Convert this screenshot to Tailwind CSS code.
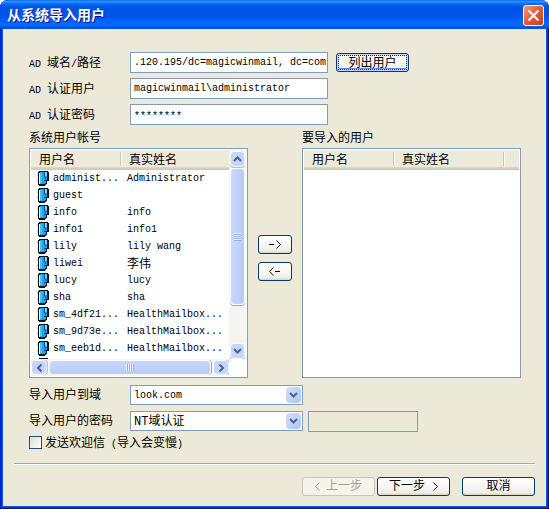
<!DOCTYPE html>
<html lang="zh-CN">

<head>
    <meta charset="UTF-8">
    <meta name="viewport" content="width=device-width, initial-scale=1.0">
    <title>从系统导入用户</title>
    <script src="https://cdn.jsdelivr.net/npm/@tailwindcss/browser@4"></script>
    <style>
        body {
            font-family: 'Liberation Mono', 'Noto Sans CJK SC', monospace;
        }

        /* Luna caption bar */
        .caption {
            background: linear-gradient(to bottom, #0058ee 0%, #3593ff 4%, #288eff 7%, #127dff 10%, #036ffc 13%, #0262ee 17%, #0057e5 22%, #0054e3 30%, #0055eb 56%, #005bf5 66%, #026afe 80%, #0066f8 90%, #0052d6 94%, #0046c0 100%);
        }

        .header {
            background: linear-gradient(to bottom, #ebeadb 0, #ebeadb 17px, #dedccb 17px, #d6d2c2 18px, #cbc7b8 20px);
        }

        .btn {
            background: linear-gradient(to bottom, #fff 0%, #f6f5f0 60%, #f0efe8 85%, #d8d2c4 100%);
        }

        .btn:disabled {
            background: #f5f4ea;
        }

        .focused {
            background: linear-gradient(to bottom, #fff 0%, #f2f1ec 100%);
            box-shadow: inset 0 0 0 2px #bcd4f6, inset 0 -3px 0 #6982ee;
        }
    </style>
</head>

<body class="bg-white text-[12px] leading-4 text-black">

    <!-- shared icons -->
    <svg class="hidden">
        <symbol id="user" viewBox="0 0 12 15" shape-rendering="crispEdges">
            <path d="M2 0h9v1h1v9h-2v3h-1v1H8v1H2v-1H1V1h1z" fill="#001420" />
            <path d="M3 1h7v8H9v3H8v1H3z" fill="#1ca4f4" />
            <path d="M2 2h1v11H2z" fill="#fff" />
            <path d="M3 2h2v10H3z" fill="#48bcfc" />
            <path d="M8 1h2v4H8z" fill="#7cd4ff" />
            <path d="M7 1h1v5H7zM8 6h1v2H8zM7 9h2v1H7z" fill="#004a80" />
            <path d="M0 2h1v3H0zM0 8h1v3H0z" fill="#dcdcdc" />
        </symbol>
        <symbol id="down" viewBox="0 0 9 6">
            <path d="M1 1l3.5 3.5L8 1" fill="none" stroke="#4d6185" stroke-width="2" />
        </symbol>
    </svg>

    <div class="flex min-h-screen flex-col rounded-t-lg bg-[#0831d9] shadow-[inset_-1px_-1px_#00138c,inset_1px_0_#0019cf]">
        <header class="caption flex h-[29px] items-center justify-between rounded-t-lg pr-[5px] pl-[7px]">
            <h1 class="pt-0.5 text-[14px] leading-5 font-bold text-white [text-shadow:1px_1px_#0f1089]">从系统导入用户</h1>
            <button type="button" aria-label="关闭" class="mt-0.5 flex size-[21px] items-center justify-center rounded-[3px] border border-white bg-linear-to-br from-[#f09a80] via-[#e25a34] to-[#c83c10]">
                <svg class="size-[13px]" viewBox="0 0 13 13">
                    <path d="M1.5 1.5l10 10M11.5 1.5l-10 10" stroke="#fff" stroke-width="2.2" />
                </svg>
            </button>
        </header>

        <form class="mx-[3px] mb-[3px] flex-1 bg-[#ece9d8] pt-[23px] pb-[10px] shadow-[0_0_0_1px_#0855dd]">
            <div class="pr-[25px] pl-[26px]">
                <div class="grid grid-cols-[101px_198px_73px] items-center gap-y-[5px]">
                    <label for="path" class="h-4 leading-[19px]"><span class="text-[10px]">AD </span>域名<span class="text-[10px]">/</span>路径</label>
                    <input id="path" type="text" value=".120.195/dc=magicwinmail, dc=com" class="h-[21px] w-full border border-[#7f9db9] bg-white pl-[3px] text-[10px]">
                    <button type="button" class="btn focused ml-2 h-[19px] w-[73px] rounded-[3px] border border-[#003c74] p-px"><span class="flex h-full items-center justify-center border border-dotted border-[#4a3a20] pt-0.5">列出用户</span></button>

                    <label for="user-name" class="h-4 leading-[19px]"><span class="text-[10px]">AD </span>认证用户</label>
                    <input id="user-name" type="text" value="magicwinmail\administrator" class="h-[21px] w-full border border-[#7f9db9] bg-white pl-[3px] text-[10px]">
                    <span></span>

                    <label for="auth" class="h-4 leading-[19px]"><span class="text-[10px]">AD </span>认证密码</label>
                    <input id="auth" type="text" value="********" class="h-[21px] w-full border border-[#7f9db9] bg-white pt-1 pl-[3px] text-[10px]">
                </div>

                <div class="mt-[5px] grid grid-cols-[1fr_54px_1fr]">
                    <h2 class="mb-0.5 h-4 leading-[19px]">系统用户帐号</h2>
                    <span></span>
                    <h2 class="mb-0.5 h-4 leading-[19px]">要导入的用户</h2>

                    <div class="grid h-[230px] grid-cols-[1fr_17px] grid-rows-[1fr_17px] border border-[#7f9db9] bg-white p-px">
                        <div class="overflow-hidden">
                            <table class="w-full table-fixed border-collapse text-left">
                                <thead>
                                    <tr class="header h-5">
                                        <th class="w-[90px] p-0 font-normal"><div class="-mt-0.5 h-[14px] border-r border-[#c7c5b2] pl-2 leading-[18px] shadow-[1px_0_#fff]">用户名</div></th>
                                        <th class="p-0 font-normal"><div class="-mt-0.5 h-[14px] pl-2 leading-[18px]">真实姓名</div></th>
                                    </tr>
                                </thead>
                                <tbody id="accounts" class="text-[10px]"></tbody>
                            </table>
                        </div>
                        <!-- vertical scrollbar -->
                        <div class="flex flex-col items-center bg-[#f5f4f0] pt-px">
                            <div class="flex h-4 w-[15px] items-center justify-center rounded-sm border border-white bg-[#c6d5fc] shadow-[0_1px_#a8bce8]"><svg class="h-1.5 w-[9px] rotate-180"><use href="#down" /></svg></div>
                            <div class="mt-px flex h-[137px] w-[15px] flex-col items-center justify-center rounded-sm border border-white bg-linear-to-r from-[#cad8fd] to-[#b6cbf8] shadow-[0_1px_#8ca6dc]">
                                <div class="h-2 w-[7px] bg-[repeating-linear-gradient(to_bottom,#eef4fe_0_1px,#8cb0f8_1px_2px)]"></div>
                            </div>
                            <div class="mt-auto flex h-4 w-[15px] items-center justify-center rounded-sm border border-white bg-[#c6d5fc] shadow-[0_1px_#a8bce8]"><svg class="h-1.5 w-[9px]"><use href="#down" /></svg></div>
                        </div>
                        <!-- horizontal scrollbar -->
                        <div class="flex items-center bg-[#f5f4f0]">
                            <div class="flex h-[15px] w-4 items-center justify-center rounded-sm border border-white bg-[#c6d5fc] shadow-[1px_0_#a8bce8]"><svg class="h-1.5 w-[9px] rotate-90"><use href="#down" /></svg></div>
                            <div class="mx-0.5 flex h-[15px] flex-1 items-center justify-center rounded-sm border border-white bg-linear-to-b from-[#cad8fd] to-[#b6cbf8] shadow-[1px_0_#8ca6dc]">
                                <div class="h-[7px] w-2 bg-[repeating-linear-gradient(to_right,#eef4fe_0_1px,#8cb0f8_1px_2px)]"></div>
                            </div>
                            <div class="flex h-[15px] w-4 items-center justify-center rounded-sm border border-white bg-[#c6d5fc] shadow-[1px_0_#a8bce8]"><svg class="h-1.5 w-[9px] -rotate-90"><use href="#down" /></svg></div>
                        </div>
                        <div class="bg-white"></div>
                    </div>

                    <div class="flex flex-col items-center gap-2 pt-[87px]">
                        <button type="button" aria-label="添加" class="btn flex h-[19px] w-[34px] items-center justify-center rounded-[3px] border border-[#003c74]">
                            <svg class="h-[9px] w-3" viewBox="0 0 12 9" fill="none" stroke="#000"><path d="M0 4.5h5M7.5 0.5l4 4-4 4" /></svg>
                        </button>
                        <button type="button" aria-label="移除" class="btn flex h-[19px] w-[34px] items-center justify-center rounded-[3px] border border-[#003c74]">
                            <svg class="h-[9px] w-3" viewBox="0 0 12 9" fill="none" stroke="#000"><path d="M11 4.5H6M4.5 0.5l-4 4 4 4" /></svg>
                        </button>
                    </div>

                    <div class="h-[230px] border border-[#7f9db9] bg-white p-px">
                        <table class="w-full table-fixed border-collapse text-left">
                            <thead>
                                <tr class="header h-5">
                                    <th class="w-[90px] p-0 font-normal"><div class="-mt-0.5 h-[14px] border-r border-[#c7c5b2] pl-2 leading-[18px] shadow-[1px_0_#fff]">用户名</div></th>
                                    <th class="w-[110px] p-0 font-normal"><div class="-mt-0.5 h-[14px] border-r border-[#c7c5b2] pl-2 leading-[18px] shadow-[1px_0_#fff]">真实姓名</div></th>
                                    <td></td>
                                </tr>
                            </thead>
                        </table>
                    </div>
                </div>

                <div class="mt-[7px] grid grid-cols-[101px_173px_110px] items-center gap-y-[6px]">
                    <label for="domain" class="h-4 leading-[19px]">导入用户到域</label>
                    <div class="relative">
                        <select id="domain" class="block h-5 w-full appearance-none border border-[#7f9db9] bg-white pt-px pl-[3px] text-[10px]">
                            <option>look.com</option>
                        </select>
                        <span class="pointer-events-none absolute top-0.5 right-0.5 flex h-4 w-[15px] items-center justify-center rounded-sm bg-linear-to-br from-[#d2defd] to-[#b0c5f5]"><svg class="h-1.5 w-[9px]"><use href="#down" /></svg></span>
                    </div>
                    <span></span>

                    <label for="mode" class="h-4 leading-4">导入用户的密码</label>
                    <div class="relative self-start">
                        <select id="mode" class="block h-5 w-full appearance-none border border-[#7f9db9] bg-white pt-px pl-[3px] text-[12px]">
                            <option>NT域认证</option>
                        </select>
                        <span class="pointer-events-none absolute top-0.5 right-0.5 flex h-4 w-[15px] items-center justify-center rounded-sm bg-linear-to-br from-[#d2defd] to-[#b0c5f5]"><svg class="h-1.5 w-[9px]"><use href="#down" /></svg></span>
                    </div>
                    <input type="text" aria-label="密码" disabled class="ml-[5px] h-[21px] w-full border border-[#7f9db9]">
                </div>

                <div class="mt-0.5 flex items-center">
                    <input id="welcome" type="checkbox" class="mr-[3px] size-[13px] appearance-none border border-[#1c5180] bg-linear-to-br from-[#dcdcd7] to-white checked:bg-[#21a121]">
                    <label for="welcome" class="h-[17px] leading-5">发送欢迎信<span class="text-[10px]"> (</span>导入会变慢<span class="text-[10px]">)</span></label>
                </div>
            </div>

            <hr class="mx-[11px] mt-3 h-0.5 border-t border-b border-t-[#aca899] border-b-white">

            <div class="mt-3 flex justify-end pr-[11px]">
                <button type="button" disabled class="btn flex h-[19px] w-[73px] items-center justify-center gap-1.5 rounded-[3px] border border-[#c9c7ba] text-[#a1a192]">
                    <svg class="h-[9px] w-[5px]" viewBox="0 0 5 9" fill="none" stroke="currentColor"><path d="M4.5 0.5l-4 4 4 4" /></svg>上一步
                </button>
                <button type="button" class="btn ml-0.5 flex h-[19px] w-[73px] items-center justify-center gap-2 rounded-[3px] border border-[#003c74]">
                    下一步<svg class="h-[9px] w-[5px]" viewBox="0 0 5 9" fill="none" stroke="currentColor"><path d="M0.5 0.5l4 4-4 4" /></svg>
                </button>
                <button type="button" class="btn ml-3 flex h-[19px] w-[73px] items-center justify-center rounded-[3px] border border-[#003c74]">取消</button>
            </div>
        </form>
    </div>

    <script>
        const accounts = [
            ['administ...', 'Administrator'],
            ['guest', ''],
            ['info', 'info'],
            ['info1', 'info1'],
            ['lily', 'lily wang'],
            ['liwei', '李伟'],
            ['lucy', 'lucy'],
            ['sha', 'sha'],
            ['sm_4df21...', 'HealthMailbox...'],
            ['sm_9d73e...', 'HealthMailbox...'],
            ['sm_eeb1d...', 'HealthMailbox...'],
            ['', '']
        ];

        const accountList = document.getElementById('accounts');

        accounts.forEach(([name, realName]) => {
            const row = document.createElement('tr');
            row.className = 'h-[17px]';
            // Chinese names need the larger size
            const size = /[^\x00-\x7f]/.test(realName) ? 'text-[12px] leading-5' : 'text-[10px] leading-[17px]';
            row.innerHTML = `
                <td class="p-0"><div class="flex h-[17px] items-center gap-1 pl-1.5 whitespace-nowrap"><svg class="h-[15px] w-3 shrink-0"><use href="#user" /></svg>${name}</div></td>
                <td class="p-0"><div class="h-[17px] pl-1.5 whitespace-nowrap ${size}">${realName}</div></td>
            `;
            accountList.appendChild(row);
        });
    </script>

</body>

</html>
